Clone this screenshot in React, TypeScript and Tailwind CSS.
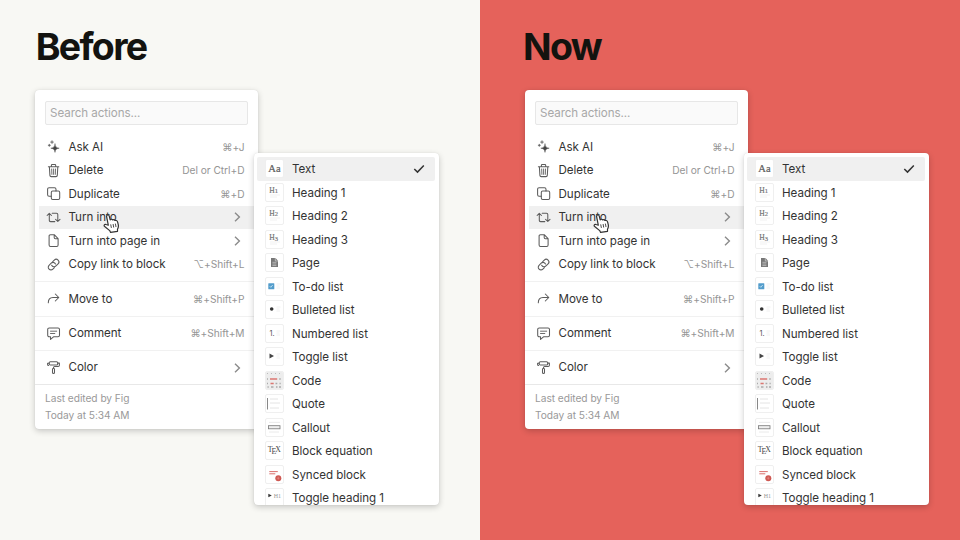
import React from "react";

type IconName =
  | "ai" | "trash" | "copy" | "turn" | "page" | "link" | "move" | "comment" | "paint";

function MenuIcon({ name }: { name: IconName }) {
  const shapes: Record<IconName, React.ReactNode> = {
    ai: (
      <>
        <path d="M8 4c.4 2.900 1.200 3.800 4.200 4.200-3 .4-3.800 1.400-4.200 4.200-.4-2.800-1.200-3.800-4.200-4.200C6.800 7.800 7.600 6.900 8 4Z" fill="#444" strokeWidth=".5" />
        <path d="M5 .8v2.600M3.700 2.100h2.600M2.300 4.300v2M1.300 5.300h2" strokeWidth=".9" />
      </>
    ),
    trash: (
      <>
        <path d="M1.400 2.800h10.400M4.400 2.700V1.300q0-.8.8-.8h2.700q.8 0 .8.8v1.400M2.400 3l.5 8.400q.1 1.200 1.300 1.200H9q1.200 0 1.300-1.200l.5-8.400" />
        <path d="M4.700 5l.2 5.400M6.600 5v5.400M8.500 5l-.2 5.400" strokeWidth=".9" />
      </>
    ),
    copy: (
      <>
        <rect x="4.300" y="4" width="8.400" height="8.400" rx="1.400" />
        <path d="M4.200 9.200H2.100Q.6 9.200.6 7.700V2.200Q.6.700 2.100.700h5.400Q9 .700 9 2.200v1.700" />
      </>
    ),
    turn: (
      <>
        <path d="M5.200 2.200h4.300q1.300 0 1.300 1.300v6.800M8.600 8.300l2.200 2.200L13 8.300" />
        <path d="M7.800 10.600H3.600q-1.300 0-1.300-1.300V2.400M.1 4.500l2.200-2.200 2.200 2.200" />
      </>
    ),
    page: <path d="M7.200.700H3.500Q2.100.700 2.100 2.100v8.900q0 1.400 1.400 1.400h6.200q1.400 0 1.400-1.400V4.600L7.200.700v2.800q0 1.200 1.200 1.200h2.700" />,
    link: (
      <g transform="rotate(-45 6.5 6.5)">
        <path d="M5 9.300H2.800a2.700 2.700 0 0 1 0-5.400h3a2.700 2.700 0 0 1 2.500 3.600" />
        <path d="M8 3.900h2.200a2.700 2.700 0 0 1 0 5.400h-3a2.700 2.700 0 0 1-2.500-3.600" />
      </g>
    ),
    move: <path d="M1.300 10.800c0-3.500 1.500-5.300 4.700-5.300h5.700M8.300 2l3.500 3.500L8.300 9" />,
    comment: (
      <>
        <path d="M2.300 1h8.700q1.500 0 1.500 1.500v5.800q0 1.500-1.500 1.500H6.500l-3 2.600V9.800H2.300Q.700 9.800.700 8.300V2.500Q.700 1 2.300 1Z" />
        <path d="M3.500 4.200h6.200M3.500 6.500h4.300" strokeWidth=".9" />
      </>
    ),
    paint: (
      <>
        <rect x="2.200" y=".7" width="8.500" height="3.300" rx="1.100" />
        <path d="M2.100 2.300H.6v1.200q0 1 1 1M10.800 2.100h1.600v2.100q0 1.200-1.200 1.200H7.700q-1.200 0-1.200 1.200v.6" />
        <rect x="5.500" y="7.200" width="2" height="5.200" rx="1" />
      </>
    ),
  };
  return (
    <svg viewBox="0 0 13 13" className="h-[13px] w-[13px] shrink-0 overflow-visible" fill="none" stroke="#5c5c5c" strokeWidth="1.05" strokeLinecap="round" strokeLinejoin="round">
      {shapes[name]}
    </svg>
  );
}

function Chevron() {
  return (
    <svg viewBox="0 0 8 10" className="mr-[4px] h-[10px] w-[8px]" fill="none" stroke="#8b8b8b" strokeWidth="1.4">
      <path d="M2 .8L6.400 5 2 9.200" />
    </svg>
  );
}

type Item = { icon: IconName; label: string; keys?: string; active?: boolean };

const primary: Item[] = [
  { icon: "ai", label: "Ask AI", keys: "⌘+J" },
  { icon: "trash", label: "Delete", keys: "Del or Ctrl+D" },
  { icon: "copy", label: "Duplicate", keys: "⌘+D" },
  { icon: "turn", label: "Turn into", active: true },
  { icon: "page", label: "Turn into page in" },
  { icon: "link", label: "Copy link to block", keys: "⌥+Shift+L" },
];
const secondary: Item[] = [
  { icon: "move", label: "Move to", keys: "⌘+Shift+P" },
  { icon: "comment", label: "Comment", keys: "⌘+Shift+M" },
  { icon: "paint", label: "Color" },
];

function ActionRow({ item }: { item: Item }) {
  return (
    <div className={`mx-1 flex h-[23.55px] items-center pl-2 pr-[9.5px] ${item.active ? "bg-[#f0f0f0]" : ""}`}>
      <MenuIcon name={item.icon} />
      <span className="ml-[8.5px] flex-1 pt-px text-[11.6px] tracking-[-0.04px] text-[#333]">{item.label}</span>
      {item.keys ? <span className="pt-px text-[10.2px] tracking-[-0.04px] text-[#959595]">{item.keys}</span> : <Chevron />}
    </div>
  );
}

const blocks = [
  "Text", "Heading 1", "Heading 2", "Heading 3", "Page", "To-do list", "Bulleted list",
  "Numbered list", "Toggle list", "Code", "Quote", "Callout", "Block equation",
  "Synced block", "Toggle heading 1",
];

function Faint() {
  return <path d="M11.500 7h4M11.500 9h3M11.500 11h3.500" stroke="#eee" strokeWidth=".8" />;
}

function BlockArt({ name }: { name: string }) {
  const serif = "font-['Liberation_Serif',serif]";
  switch (name) {
    case "Text":
      return <text x="3.300" y="12.600" fontSize="10.500" fill="#606060" stroke="#606060" strokeWidth=".2" className={serif}>Aa</text>;
    case "Heading 1":
    case "Heading 2":
    case "Heading 3":
      return (
        <>
          <text x="4.200" y="9.500" fontSize="7.600" fill="#707070" stroke="#707070" strokeWidth=".15" className={serif}>
            H<tspan fontSize="6.500" dy={name.endsWith("3") ? "1" : "0"}>{name.slice(-1)}</tspan>
          </text>
          <path d="M5 12h10M5 14h7" stroke="#eee" strokeWidth=".8" />
        </>
      );
    case "Page":
      return (
        <>
          <path d="M6 5h4.500L13 7.800V14H6Z" fill="#777" />
          <path d="M10.300 5v3H13M7.400 9.300h4M7.400 11h4M7.400 12.600h4" stroke="#ddd" strokeWidth=".6" fill="none" />
        </>
      );
    case "To-do list":
      return (
        <>
          <rect x="3.300" y="6.200" width="6" height="6" rx=".5" fill="#529ccb" />
          <path d="M4.800 9.200l1 1.100 1.900-2.300" stroke="#d5edf8" strokeWidth=".8" fill="none" />
          <Faint />
        </>
      );
    case "Bulleted list":
      return <><circle cx="6.700" cy="9" r="1.800" fill="#333" /><Faint /></>;
    case "Numbered list":
      return <><text x="4.500" y="11.500" fontSize="7.300" fill="#555" className="font-['Inter',sans-serif]">1.</text><Faint /></>;
    case "Toggle list":
      return <><path d="M4.500 6.600v5L9 9.100Z" fill="#444" /><Faint /></>;
    case "Code":
      return (
        <>
          <rect width="19" height="19" rx="2" fill="#ededed" />
          <path d="M2 2.500h15" stroke="#bbb" strokeDasharray="1 3" />
          <path d="M2 8h1M14.200 8h1.500M2 12.500h1M10.500 12.500h1.800M14.500 12.500h1.200M2.500 16h1.200M6 16h2.500M11 16h1.500M14 16h2" stroke="#aaa" strokeWidth="1.300" />
          <path d="M5 8h7.200M5.500 12.500h3.200" stroke="#db7772" strokeWidth="1.500" />
        </>
      );
    case "Quote":
      return <><path d="M2.500 4v11.500" stroke="#888" strokeWidth="1" /><path d="M5 5h8M5 9h10M5 14h9" stroke="#ddd" strokeWidth=".8" /></>;
    case "Callout":
      return <><path d="M4 4.400h11M4 14h10" stroke="#e4e4e4" strokeWidth=".8" /><rect x="3.500" y="7.700" width="11.500" height="3.100" fill="#eee" stroke="#777" strokeWidth=".8" /></>;
    case "Block equation":
      return (
        <text x="2.800" y="11.100" fontSize="7.800" fill="#444" className={serif}>
          T<tspan x="6.600" y="13.200">E</tspan><tspan x="10.300" y="11.100">X</tspan>
        </text>
      );
    case "Synced block":
      return (
        <>
          <path d="M4.300 6.600h8.500M4.300 8.800h6" stroke="#d5605b" strokeWidth=".9" />
          <circle cx="13.300" cy="13.200" r="3" fill="#cf5953" />
          <path d="M11.800 13.200h2.800M13.300 11.700v2.900" stroke="#ec9c98" strokeWidth=".5" />
        </>
      );
    default:
      return (
        <>
          <path d="M3.300 5.700v3.600L6.800 7.500Z" fill="#333" />
          <text x="8.700" y="9.700" fontSize="6" fill="#999" className={serif}>H1</text>
        </>
      );
  }
}

function Submenu() {
  return (
    <div className="absolute left-[218.5px] top-[62.5px] h-[352px] w-[185px] overflow-hidden rounded-[4px] bg-white pt-[4.5px] font-['Inter',sans-serif] shadow-[0_0_1px_rgba(0,0,0,.12),0_2px_6px_rgba(0,0,0,.2)]">
      {blocks.map((name, i) => (
        <div key={name} className={`mx-[3.5px] flex h-[23.52px] items-center rounded-[2px] pl-2 pr-[10px] ${i === 0 ? "bg-[#f0f0f0]" : ""}`}>
          <svg viewBox="1 1 17 17" className="h-[19px] w-[19px] shrink-0 rounded-[2px] border border-[#efefef] bg-white">
            <BlockArt name={name} />
          </svg>
          <span className="ml-[8px] flex-1 whitespace-nowrap pt-[2px] text-[11.6px] tracking-[-0.04px] text-[#333]">{name}</span>
          {i === 0 && (
            <svg viewBox="0 0 12 10" className="h-[10px] w-[12px]" fill="none" stroke="#333" strokeWidth="1.5">
              <path d="M1.300 5l3.200 3.100L10.800 1.500" />
            </svg>
          )}
        </div>
      ))}
    </div>
  );
}

function HandCursor() {
  return (
    <svg viewBox="0 0 17 20" className="absolute left-[67.5px] top-[123px] h-[20px] w-[17px]" fill="white" stroke="#333" strokeWidth="1.2" strokeLinejoin="round">
      <path d="M5.300 12.200 3.700 4.100C3.200 1.500 5.700.900 6.300 3.300l.9 3.500c.8-.9 2.100-.6 2.400.2.800-.7 2-.4 2.300.5 1.400-.5 2.400.2 2.800 1.900l.6 2.500c.3 1.600-.1 3.100-.8 4.300v2.100l-6.900 1.100-.9-1.800L2 13.800c-1.800-1.200-.5-3 1.100-2.300Z" />
      <path d="M7.700 11.400l.7 3.500M10.100 11l.6 3.500M12.400 10.600l.6 3.400" strokeWidth=".9" />
    </svg>
  );
}

function ActionMenu() {
  return (
    <div className="relative h-[339px] w-[223px] rounded-[4px] bg-white pt-[11px] font-['Inter',sans-serif] shadow-[0_0_1px_rgba(0,0,0,.14),0_2px_6px_rgba(0,0,0,.2)]">
      <div className="mx-[10px] flex h-[24px] items-center rounded-[2px] border border-[#e7e7e7] bg-[#fafafa] pl-[4px] pt-[2px] text-[11.6px] tracking-[-0.06px] text-[#a8a8a8]">
        Search actions...
      </div>
      <div className="pt-[10px]">
        {primary.map((item) => <ActionRow key={item.label} item={item} />)}
      </div>
      {secondary.map((item) => (
        <div key={item.label} className="mt-[5px] border-t border-[#f1f1f1] pt-[4.8px]">
          <ActionRow item={item} />
        </div>
      ))}
      <div className="mt-[5px] border-t border-[#e8e8e8] pl-[10px] pt-[5px] text-[10.2px] leading-[16.5px] tracking-[-0.05px] text-[#999]">
        <div>Last edited by Fig</div>
        <div>Today at 5:34 AM</div>
      </div>
      <Submenu />
      <HandCursor />
    </div>
  );
}

function Panel({ title, tone, inset }: { title: string; tone: string; inset: string }) {
  return (
    <section className={`h-full w-1/2 ${tone}`}>
      <h1 className={`flex h-[90px] items-center pt-[5px] font-['Inter',sans-serif] text-[37.5px] font-bold tracking-[-1.7px] text-[#13130f] ${inset}`}>
        {title}
      </h1>
      <ActionMenu />
    </section>
  );
}

export default function App() {
  return (
    <main className="flex h-[540px] w-[960px] overflow-hidden">
      <Panel title="Before" tone="bg-[#f8f8f4] pl-[35px]" inset="ml-[0.7px]" />
      <Panel title="Now" tone="bg-[#e5625b] pl-[45px]" inset="-ml-[2px]" />
    </main>
  );
}
